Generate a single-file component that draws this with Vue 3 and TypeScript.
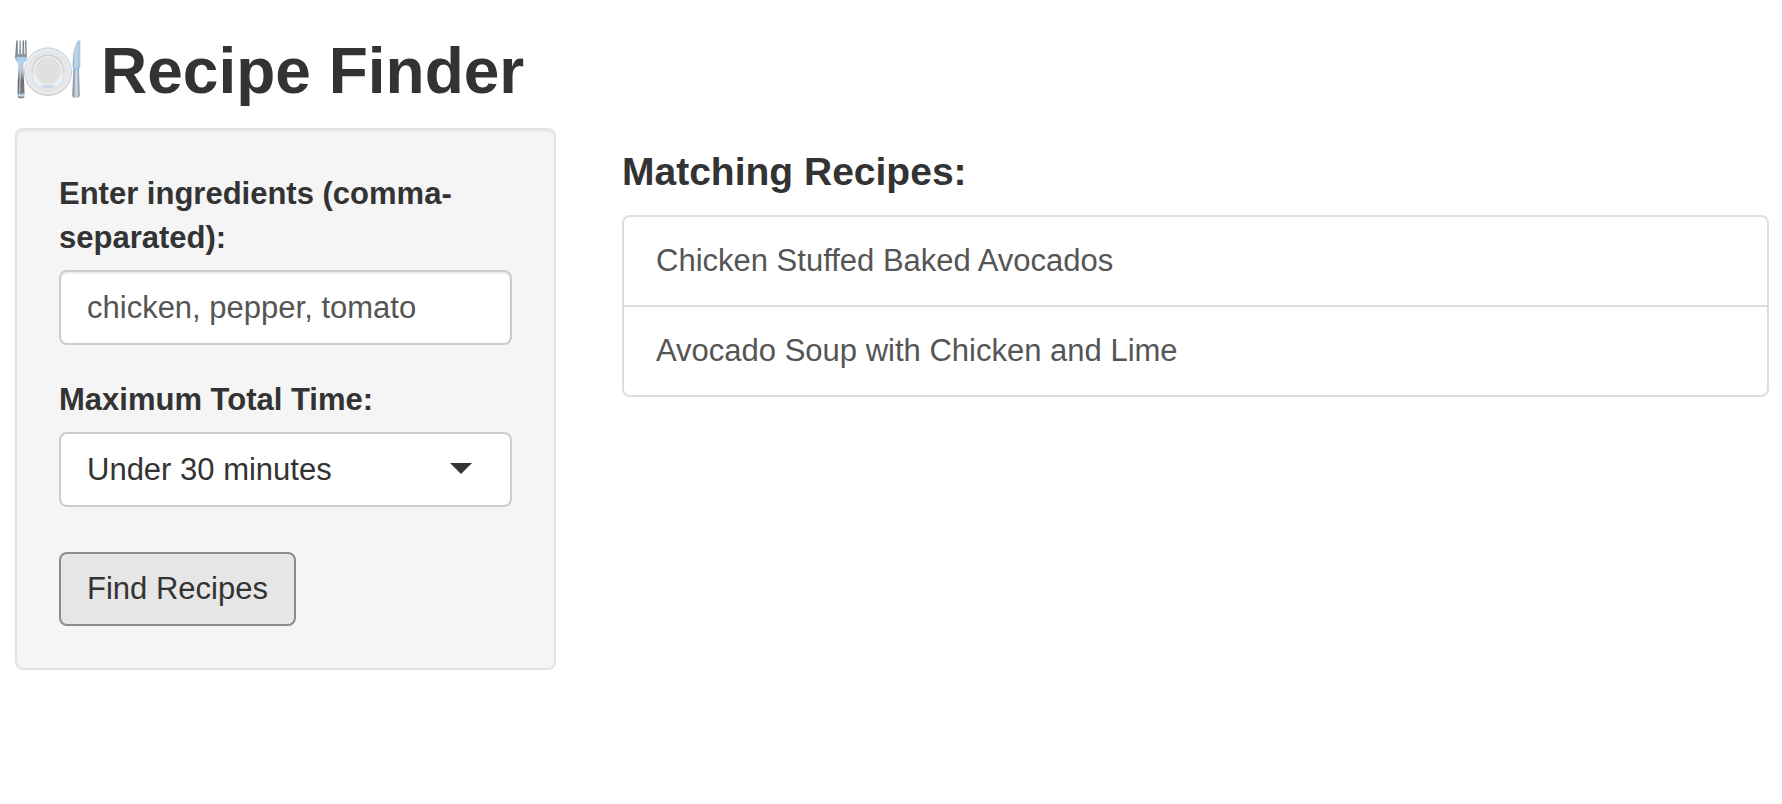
<script setup lang="ts">
import { ref } from 'vue'

interface Recipe {
  id: number
  title: string
}

const timeOptions: string[] = ['Under 30 minutes', 'Under 1 hour', 'Any time']
const ingredients = ref<string>('chicken, pepper, tomato')
const maxTime = ref<string>(timeOptions[0])

const recipes = ref<Recipe[]>([
  { id: 1, title: 'Chicken Stuffed Baked Avocados' },
  { id: 2, title: 'Avocado Soup with Chicken and Lime' },
])
</script>

<template>
  <div class="page">
    <h1 class="title">
      <svg class="plate" viewBox="45 42 198 186" aria-hidden="true">
        <defs>
          <linearGradient id="steel" x1="0" y1="0" x2="0" y2="1">
            <stop offset="0" stop-color="#70767c" />
            <stop offset="0.28" stop-color="#8b98a4" />
            <stop offset="0.36" stop-color="#b4d3ef" />
            <stop offset="0.5" stop-color="#b5c6d6" />
            <stop offset="0.7" stop-color="#6c6e71" />
            <stop offset="0.9" stop-color="#7b7e81" />
            <stop offset="0.95" stop-color="#c5e0f5" />
            <stop offset="1" stop-color="#5d6063" />
          </linearGradient>
          <linearGradient id="blade" x1="0" y1="0" x2="1" y2="0">
            <stop offset="0" stop-color="#8fa6b9" />
            <stop offset="0.35" stop-color="#c3d9ea" />
            <stop offset="1" stop-color="#a4c3da" />
          </linearGradient>
          <linearGradient id="handle" x1="0" y1="0" x2="1" y2="0">
            <stop offset="0" stop-color="#777c81" />
            <stop offset="0.3" stop-color="#a9b4bd" />
            <stop offset="0.55" stop-color="#c8e2f6" />
            <stop offset="1" stop-color="#82898f" />
          </linearGradient>
          <linearGradient id="rim" x1="0" y1="0" x2="0" y2="1">
            <stop offset="0" stop-color="#b5c8d6" />
            <stop offset="0.3" stop-color="#d5d7da" />
            <stop offset="1" stop-color="#b9bcc1" />
          </linearGradient>
          <linearGradient id="well" x1="0" y1="0" x2="0" y2="1">
            <stop offset="0" stop-color="#cbcbcc" />
            <stop offset="0.6" stop-color="#dcdde0" />
            <stop offset="1" stop-color="#c9dbee" />
          </linearGradient>
        </defs>
        <circle cx="144" cy="137" r="71" fill="#e5e6e8" stroke="url(#rim)" stroke-width="3" />
        <circle cx="144" cy="136" r="66" fill="none" stroke="#ebecee" stroke-width="5" />
        <circle cx="144" cy="136" r="50" fill="url(#well)" />
        <circle cx="144" cy="134" r="44" fill="#ececed" />
        <circle cx="144" cy="134" r="39" fill="#e0e0e0" />
        <path d="M101 146a44 44 0 0 0 24 33M187 146a44 44 0 0 1-24 33" fill="none" stroke="#f4f8fc" stroke-width="5" />
        <path
          d="M49 44q2-3 4 0l1 39q2 4 4 0l1-39q1-3 3 0l1 39q2 4 4 0l1-39q2-3 4 0l1 39q2 4 3 0l-1-39q3-3 4 0l2 50c0 11-8 14-11 21l4 94q0 8-11 8t-11-8l3-94c-2-7-10-10-10-21z"
          fill="url(#steel)"
        />
        <path d="M49 93h29q-2 8-10 12h-9q-8-3-10-12z" fill="#b0d2f0" />
        <path d="M62 120l-3 80" fill="none" stroke="#c9d3db" stroke-width="3" />
        <path d="M220 126l-3 82q0 8 11 8t11-8l-2-82z" fill="url(#handle)" />
        <path d="M218 124c0-29 2-62 14-79q5-4 9 0v73q0 12-11 12-10 0-12-6z" fill="url(#blade)" />
        <path d="M219 120q10 8 21 0v7q-11 7-21 1z" fill="#9cc5e8" />
      </svg>
      <span>Recipe Finder</span>
    </h1>

    <div class="layout">
      <form class="panel" @submit.prevent>
        <div class="field">
          <label for="ingredients">Enter ingredients (comma-separated):</label>
          <input id="ingredients" v-model="ingredients" class="control text-box" type="text" />
        </div>
        <div class="field">
          <label for="max-time">Maximum Total Time:</label>
          <div class="select-wrap">
            <select id="max-time" v-model="maxTime" class="control">
              <option v-for="option in timeOptions" :key="option" :value="option">{{ option }}</option>
            </select>
            <svg class="caret" viewBox="0 0 22 11" aria-hidden="true"><path d="M0 0h22L11 11z" /></svg>
          </div>
        </div>
        <button class="submit" type="submit">Find Recipes</button>
      </form>

      <main class="results">
        <h2 class="subtitle">Matching Recipes:</h2>
        <ul class="list">
          <li v-for="recipe in recipes" :key="recipe.id" class="item">{{ recipe.title }}</li>
        </ul>
      </main>
    </div>
  </div>
</template>

<style>
body {
  margin: 0;
  background: #fff;
}
</style>

<style scoped>
.page,
.page * {
  box-sizing: border-box;
}

.page {
  padding: 35px 13px 33px 15px;
  font-family: 'Liberation Sans', Arial, sans-serif;
  font-size: 31px;
  line-height: 44px;
  color: #333;
}

.title {
  display: flex;
  align-items: center;
  gap: 20px;
  margin: 0 0 21px;
  font-size: 64px;
  font-weight: 700;
  line-height: 72px;
}

.plate {
  flex: none;
  width: 66px;
  height: 62px;
}

.layout {
  display: grid;
  grid-template-columns: 541fr 1147fr;
  align-items: start;
  gap: 66px;
}

.panel {
  padding: 42px;
  border: 2px solid #e3e3e3;
  border-radius: 8px;
  background: #f5f5f5;
  box-shadow: inset 0 2px 2px rgba(0, 0, 0, 0.05);
}

.field {
  margin-bottom: 33px;
}

label {
  display: block;
  margin-bottom: 10px;
  font-weight: 700;
}

.control {
  display: block;
  width: 100%;
  height: 75px;
  margin: 0;
  padding: 0 26px;
  border: 2px solid #ccc;
  border-radius: 8px;
  background: #fff;
  color: #333;
  font: inherit;
  appearance: none;
  outline: none;
}

.text-box {
  color: #555;
  box-shadow: inset 0 2px 2px rgba(0, 0, 0, 0.08);
}

.select-wrap {
  position: relative;
}

.caret {
  position: absolute;
  top: 31px;
  right: 40px;
  width: 22px;
  height: 11px;
  fill: #333;
  pointer-events: none;
}

.submit {
  display: block;
  height: 74px;
  margin: 45px 0 0;
  padding: 0 26px;
  border: 2px solid #8c8c8c;
  border-radius: 8px;
  background: #e6e6e6;
  color: #333;
  font: inherit;
}

.subtitle {
  margin: 22px 0 21px;
  font-size: 39px;
  font-weight: 700;
  line-height: 44px;
}

.list {
  margin: 0;
  padding: 0;
  border: 2px solid #ddd;
  border-radius: 8px;
  list-style: none;
}

.item {
  padding: 22px 32px;
  color: #555;
}

.item + .item {
  border-top: 2px solid #ddd;
}
</style>
